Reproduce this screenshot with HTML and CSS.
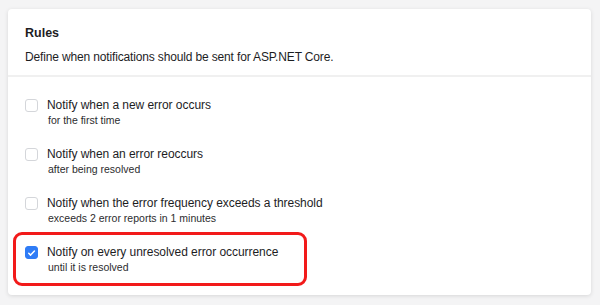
FILE: index.html
```html
<!DOCTYPE html>
<html lang="en">
<head>
  <meta charset="UTF-8">
  <meta name="viewport" content="width=device-width,initial-scale=1">
  <title>Notification Rules</title>
  <link rel="stylesheet" href="styles.css">
</head>
<body>
  <div class="card">
    <header>
      <h2>Rules</h2>
      <p>Define when notifications should be sent for ASP.NET Core.</p>
    </header>
    <div class="rules">
      <!-- one row per rule -->
      <label class="rule">
        <span class="box"></span>
        <span class="rule-text">
          <span class="rule-title">Notify when a new error occurs</span>
          <span class="rule-sub">for the first time</span>
        </span>
      </label>
      <label class="rule">
        <span class="box"></span>
        <span class="rule-text">
          <span class="rule-title">Notify when an error reoccurs</span>
          <span class="rule-sub">after being resolved</span>
        </span>
      </label>
      <label class="rule">
        <span class="box"></span>
        <span class="rule-text">
          <span class="rule-title">Notify when the error frequency exceeds a threshold</span>
          <span class="rule-sub">exceeds 2 error reports in 1 minutes</span>
        </span>
      </label>
      <label class="rule highlight">
        <span class="box checked">
          <svg viewBox="0 0 12 12" width="12" height="12"><path d="M3 6.3l2 2L9.2 3.8" fill="none" stroke="#fff" stroke-width="1.6" stroke-linecap="round" stroke-linejoin="round"/></svg>
        </span>
        <span class="rule-text">
          <span class="rule-title">Notify on every unresolved error occurrence</span>
          <span class="rule-sub">until it is resolved</span>
        </span>
      </label>
    </div>
  </div>
</body>
</html>
```

FILE: styles.css
```css
body { background: #f4f4f5; color: #1d1d1f; font-family: "Liberation Sans", Arial, sans-serif; margin: 0; padding: 9px 9px 10px 8px; }
.card { background: #fff; border-radius: 4px; box-shadow: 0 1px 4px rgba(0,0,0,0.12); }
header { padding: 16px 17px 10px; border-bottom: 2px solid #f0f0f0; }
header h2 { margin: 0 0 8px; font-size: 12.5px; line-height: 16px; font-weight: 700; }
header p { margin: 0; font-size: 12px; line-height: 16px; letter-spacing: -0.15px; }
.rules { padding: 11px 17px 11px; }
.rule { display: flex; gap: 9px; padding: 9px 0; position: relative; }
.box {
  width: 13px;
  height: 13px;
  margin-top: 2px;
  border: 1px solid #d4d6da;
  border-radius: 3px;
  box-sizing: border-box;
  background: #fff;
  flex-shrink: 0;
  display: flex;
  align-items: center;
  justify-content: center;
}
.box.checked { background: #2f7cf6; border-color: #2f7cf6; }
.rule-text { display: flex; flex-direction: column; }
.rule-title { font-size: 12px; line-height: 16px; letter-spacing: -0.05px; }
.rule-sub { font-size: 10.5px; line-height: 15px; margin-left: 1px; color: #2c2c2e; }
.highlight::after {
  content: "";
  position: absolute;
  top: -3px;
  bottom: -2px;
  left: -12px;
  width: 294px;
  border: 3px solid #f21a1a;
  border-radius: 9px;
  box-sizing: border-box;
}
```
